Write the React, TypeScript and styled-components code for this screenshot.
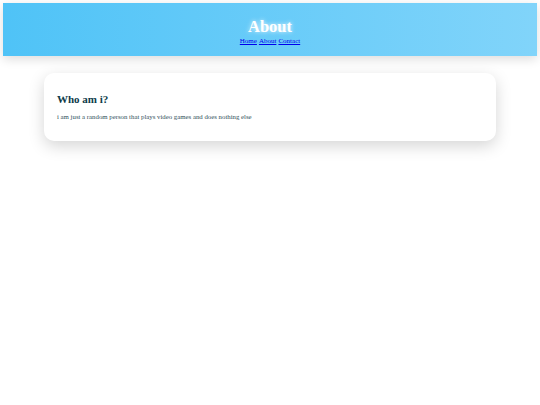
import React from "react";
import styled, { createGlobalStyle } from "styled-components";

const Global = createGlobalStyle`
  html, body { margin: 0; padding: 0; background: #ffffff; }
  body { font-family: "Liberation Serif", "Times New Roman", serif; }
`;

const Page = styled.div`
  padding: 3px;
  min-height: 100vh;
  box-sizing: border-box;
`;

const Header = styled.header`
  height: 53px;
  box-sizing: border-box;
  padding-top: 15px;
  background: linear-gradient(90deg, #4fc3f7 0%, #81d4fa 100%);
  box-shadow: 0 3px 10px rgba(0, 0, 0, 0.14);
  text-align: center;
`;

const Title = styled.h1`
  margin: 0;
  font-size: 16.5px;
  line-height: 18px;
  font-weight: bold;
  color: #ffffff;
  text-shadow: 0 0 4px rgba(255, 255, 255, 0.9);
`;

const Nav = styled.nav`
  font-size: 7px;
  line-height: 8px;
  margin-top: 1px;
  display: flex;
  justify-content: center;
  gap: 2px;
`;

const NavLink = styled.a`
  color: #0000ee;
  text-decoration: underline;
`;

const Main = styled.main`
  padding: 17px 41px 0 41px;
`;

const Card = styled.section`
  background: #ffffff;
  border-radius: 10px;
  box-shadow: 0 5px 16px rgba(0, 0, 0, 0.17);
  padding: 20px 13px 0 13px;
  height: 68px;
  box-sizing: border-box;
`;

const CardTitle = styled.h2`
  margin: 0 0 8px 0;
  font-size: 11px;
  line-height: 12px;
  font-weight: bold;
  color: #0d3b4a;
`;

const CardText = styled.p`
  margin: 0;
  font-size: 6.8px;
  line-height: 8px;
  color: #2f4f5a;
`;

export default function App() {
  return (
    <>
      <Global />
      <Page>
        <Header>
          <Title>About</Title>
          <Nav>
            <NavLink href="#">Home</NavLink>
            <NavLink href="#">About</NavLink>
            <NavLink href="#">Contact</NavLink>
          </Nav>
        </Header>
        <Main>
          <Card>
            <CardTitle>Who am i?</CardTitle>
            <CardText>i am just a random person that plays video games and does nothing else</CardText>
          </Card>
        </Main>
      </Page>
    </>
  );
}
